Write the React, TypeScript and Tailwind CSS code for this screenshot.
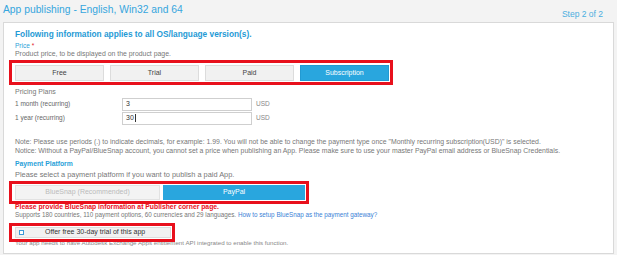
import React from 'react';

const blue = 'text-[#2a9fd8]';

const PriceButton = ({ label, active }: { label: string; active?: boolean }) => (
  <div
    className={
      active
        ? 'w-[89px] h-[16px] flex items-center justify-center bg-[#29a6de] border border-[#229ad2] text-white text-[7px]'
        : 'w-[89px] h-[16px] flex items-center justify-center bg-[#f1f1f1] border border-[#dcdcdc] text-[#444] text-[7px]'
    }
  >
    {label}
  </div>
);

const PlanRow = ({ label, value }: { label: string; value: string }) => (
  <div className="flex items-center h-[14px]">
    <div className="w-[107px] text-[6.5px] text-[#666]">{label}</div>
    <div className="w-[130px] h-[13px] border border-[#cfcfcf] bg-white flex items-center px-[3px] text-[7px] text-[#333]">
      {value}
      {value === '30' && <span className="w-px h-[8px] bg-[#333] ml-px" />}
    </div>
    <div className="ml-[4px] text-[6.5px] text-[#888]">USD</div>
  </div>
);

export default function App() {
  return (
    <div className="w-[617px] h-[255px] bg-[#f3f3f3] overflow-hidden flex flex-col" style={{ fontFamily: '"Liberation Sans", Arial, sans-serif' }}>
      {/* header */}
      <div className="h-[22px] flex justify-between items-start">
        <div className="ml-[3px] mt-[3px] text-[10.3px] leading-[14px] text-[#36a6de]">App publishing - English, Win32 and 64</div>
        <div className="mr-[14px] mt-[9px] text-[8.5px] leading-[10px] text-[#4aaee0]">Step 2 of 2</div>
      </div>

      {/* panel */}
      <div className="mx-[3px] h-[232px] bg-white border border-[#d9d9d9] pl-[11px] flex flex-col">
        <div className="mt-[5px] h-[12px] leading-[12px] text-[8.3px] font-bold text-[#1f9ad5]">
          Following information applies to all OS/language version(s).
        </div>
        <div className={`mt-[2px] h-[8px] leading-[8px] text-[6.5px] ${blue}`}>
          Price <span className="text-[#e0202a]">*</span>
        </div>
        <div className="h-[8px] leading-[8px] text-[6.9px] text-[#777]">Product price, to be displayed on the product page.</div>

        <div className="mt-[2px] -ml-[6px] w-fit border-[3px] border-[#e8101c] pl-[3px] pr-px pt-[2px] pb-px flex gap-[6px]">
          <PriceButton label="Free" />
          <PriceButton label="Trial" />
          <PriceButton label="Paid" />
          <PriceButton label="Subscription" active />
        </div>

        <div className="mt-[2px] h-[9px] leading-[9px] text-[7px] text-[#777]">Pricing Plans</div>
        <div className="mt-[1px] flex flex-col">
          <PlanRow label="1 month (recurring)" value="3" />
          <PlanRow label="1 year (recurring)" value="30" />
        </div>

        <div className="mt-[12px] text-[6.9px] leading-[9px] text-[#777] whitespace-nowrap">
          <div>
            Note: Please use periods (.) to indicate decimals, for example: 1.99. You will not be able to change the payment type once "Monthly recurring subscription(USD)" is selected.
          </div>
          <div>
            Notice: Without a PayPal/BlueSnap account, you cannot set a price when publishing an App. Please make sure to use your master PayPal email address or BlueSnap Credentials.
          </div>
        </div>

        <div className={`mt-[4px] h-[10px] leading-[10px] text-[6.8px] font-bold ${blue}`}>Payment Platform</div>
        <div className="mt-px h-[10px] leading-[10px] text-[7.4px] text-[#777]">Please select a payment platform if you want to publish a paid App.</div>

        <div className="mt-px -ml-[6px] w-[300px] border-[3px] border-[#e8101c] pl-[3px] pr-[1px] pt-[1px] pb-[1px] flex gap-[3px]">
          <div className="w-[145px] h-[15px] flex items-center justify-center bg-[#f3f3f3] border border-[#e2e2e2] text-[7px] text-[#bbb]">
            BlueSnap (Recommended)
          </div>
          <div className="flex-1 h-[15px] flex items-center justify-center bg-[#29a6de] text-white text-[7px]">PayPal</div>
        </div>

        <div className="-mt-[1px] h-[7px] leading-[7px] text-[6.8px] font-bold text-[#e8101c]">
          Please provide BlueSnap information at Publisher corner page.
        </div>
        <div className="h-[9px] leading-[9px] text-[6.3px] text-[#777]">
          Supports 180 countries, 110 payment options, 60 currencies and 29 languages.{' '}
          <span className="text-[#3b7fd6]">How to setup BlueSnap as the payment gateway?</span>
        </div>

        <div className="relative z-10 mt-[4px] -ml-[6px] w-[166px] border-[3px] border-[#e8101c] pl-[3px] pr-[1px] pt-[1px] pb-[1px]">
          <div className="h-[11px] flex items-center bg-[#f1f1f1] border border-[#dcdcdc]">
            <span className="ml-[3px] w-[5px] h-[5px] border border-[#3d9ad8] bg-white" />
            <span className="ml-[21px] text-[7px] text-[#333]">Offer free 30-day trial of this app</span>
          </div>
        </div>
        <div className="-mt-[3px] h-[8px] leading-[8px] text-[6.2px] text-[#888]">
          Your app needs to have Autodesk Exchange Apps entitlement API integrated to enable this function.
        </div>
      </div>
    </div>
  );
}
